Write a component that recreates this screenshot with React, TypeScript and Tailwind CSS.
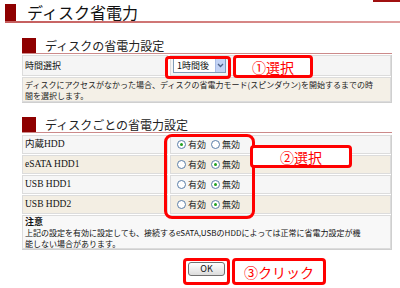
import React from "react";

const sans = { fontFamily: '"Noto Sans CJK JP", "Noto Sans", sans-serif' };
const serif = { fontFamily: '"Liberation Serif", "Noto Sans CJK JP", serif' };

function Radio({ checked }: { checked?: boolean }) {
  return (
    <span className="inline-flex items-center justify-center w-[9px] h-[9px] rounded-full border border-[#5a7ea8] bg-white shrink-0">
      {checked && <span className="w-[3px] h-[3px] rounded-full bg-[#21a121]" />}
    </span>
  );
}

function RadioPair({ on }: { on: boolean }) {
  return (
    <div className="flex items-center h-full pl-[6px] text-[9px] text-[#222]" style={sans}>
      <Radio checked={on} />
      <span className="ml-[2px]">有効</span>
      <span className="ml-[5px]" />
      <Radio checked={!on} />
      <span className="ml-[2px]">無効</span>
    </div>
  );
}

function Row({ label, on, bg }: { label: string; on: boolean; bg: string }) {
  return (
    <div className="flex gap-[2px] h-[19px]">
      <div className={`w-[146px] border border-[#dcdcdc] ${bg} flex items-center pl-[2px] text-[9.5px] text-[#111]`} style={serif}>
        {label}
      </div>
      <div className={`flex-1 border border-[#dcdcdc] ${bg}`}>
        <RadioPair on={on} />
      </div>
    </div>
  );
}

function Header({ text }: { text: string }) {
  return (
    <div className="ml-[22px] w-[370px]">
      <div className="flex items-end h-[15px]">
        <div className="w-[14px] h-[15px] bg-[#8e0000]" />
        <div className="ml-[9px] text-[12px] leading-[14px] text-[#222]" style={sans}>{text}</div>
      </div>
      <div className="h-[1px] bg-[#cc8a8a]" />
    </div>
  );
}

export default function App() {
  return (
    <div className="relative w-[400px] h-[288px] bg-white overflow-hidden" style={sans}>
      <div className="absolute right-0 top-0 w-[27px] h-[2px] bg-[#a01010]" />

      {/* Title */}
      <div className="pt-[4px]">
        <div className="flex items-center h-[17px] ml-[5px]">
          <div className="w-[11px] h-[17px] bg-[#8e0000]" />
          <div className="ml-[11px] text-[16px] leading-[17px] text-[#111]">ディスク省電力</div>
        </div>
        <div className="ml-[5px] h-[2px] bg-gradient-to-r from-[#c45c5c] to-[#e0a0a0]" />
      </div>

      {/* Section 1 */}
      <div className="mt-[15px]">
        <Header text="ディスクの省電力設定" />
        <div className="ml-[22px] w-[370px] mt-[1px] flex flex-col gap-[1px] border-r border-b border-[#cfcfcf]">
          <div className="flex gap-[2px] h-[21px]">
            <div className="w-[146px] border border-[#dcdcdc] bg-[#f5f5f5] flex items-center pl-[2px] text-[9px] text-[#111]">
              時間選択
            </div>
            <div className="flex-1 border border-[#dcdcdc] bg-[#f5f5f5] flex items-center pl-[2px]">
              <div className="flex items-center h-[15px] w-[53px] border border-[#7f9db9] bg-white">
                <span className="flex-1 text-[9px] leading-[13px] pl-[3px] text-[#111]">1時間後</span>
                <span className="w-[10px] h-[13px] bg-[#c3d3f5] border-l border-[#a9bde6] flex items-center justify-center">
                  <svg width="7" height="5" viewBox="0 0 7 5">
                    <path d="M1 1 L3.5 3.5 L6 1" stroke="#4d6185" strokeWidth="1.3" fill="none" />
                  </svg>
                </span>
              </div>
            </div>
          </div>
          <div className="h-[25px] border border-[#dcdcdc] bg-[#f4f0e7] pl-[2px] pt-[1px] text-[8px] leading-[11px] text-[#222]">
            ディスクにアクセスがなかった場合、ディスクの省電力モード(スピンダウン)を開始するまでの時
            <br />
            間を選択します。
          </div>
        </div>
      </div>

      {/* Section 2 */}
      <div className="mt-[14px]">
        <Header text="ディスクごとの省電力設定" />
        <div className="ml-[22px] w-[370px] mt-[2px] flex flex-col gap-[1px] border-r border-b border-[#cfcfcf]">
          <Row label="内蔵HDD" on={true} bg="bg-[#f6f6f6]" />
          <Row label="eSATA HDD1" on={false} bg="bg-[#f3eee3]" />
          <Row label="USB HDD1" on={false} bg="bg-[#f6f6f6]" />
          <Row label="USB HDD2" on={false} bg="bg-[#f3eee3]" />
          <div className="h-[34px] border border-[#dcdcdc] bg-[#f8f8f8] pl-[2px] text-[#111]">
            <div className="text-[9px] leading-[11px] font-bold">注意</div>
            <div className="text-[8px] leading-[11px]">
              上記の設定を有効に設定しても、接続するeSATA,USBのHDDによっては正常に省電力設定が機
              <br />
              能しない場合があります。
            </div>
          </div>
        </div>
      </div>

      {/* OK button */}
      <div className="mt-[12px] pl-[188px] flex">
        <button className="w-[37px] h-[14px] rounded-[3px] border border-[#707070] bg-gradient-to-b from-white to-[#dcdcdc] text-[9px] leading-[12px] text-[#111] flex items-center justify-center">
          OK
        </button>
      </div>

      {/* Annotations */}
      <div className="absolute left-[165px] top-[56px] w-[66px] h-[23px] border-[3px] border-[#ff0000] rounded-[4px]" />
      <div className="absolute left-[233px] top-[55px] w-[80px] h-[23px] border-[3px] border-[#ff0000] rounded-[4px] bg-white flex items-center justify-center text-[14px] leading-[16px] text-[#ff0000]">
        ①選択
      </div>

      <div className="absolute left-[164px] top-[134px] w-[91px] h-[85px] border-[3px] border-[#ff0000] rounded-[8px]" />
      <div className="absolute left-[250px] top-[145px] w-[102px] h-[23px] border-[3px] border-[#ff0000] rounded-[4px] bg-white flex items-center justify-center text-[14px] leading-[16px] text-[#ff0000]">
        ②選択
      </div>

      <div className="absolute left-[183px] top-[258px] w-[47px] h-[27px] border-[3px] border-[#ff0000] rounded-[4px]" />
      <div className="absolute left-[232px] top-[258px] w-[94px] h-[27px] border-[3px] border-[#ff0000] rounded-[4px] bg-white flex items-center justify-center text-[14px] leading-[16px] text-[#ff0000]">
        ③クリック
      </div>
    </div>
  );
}
